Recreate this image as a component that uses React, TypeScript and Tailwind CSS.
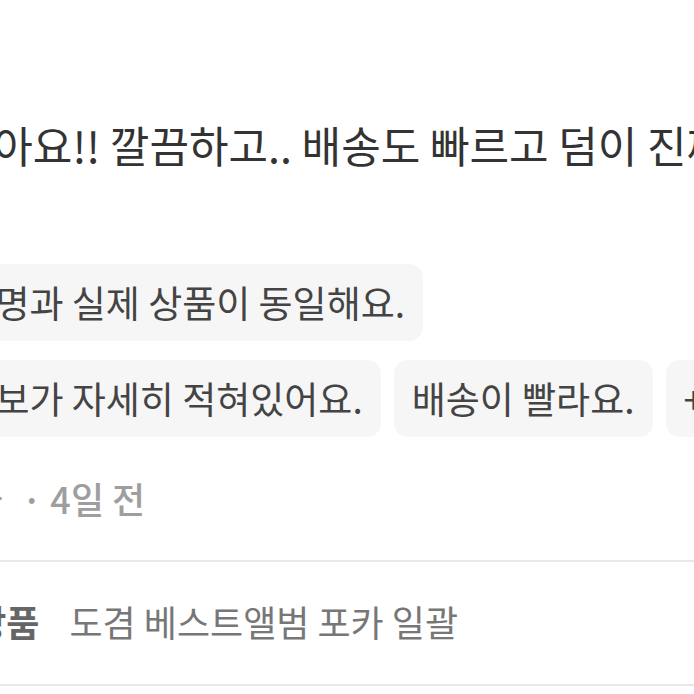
const tagRows = [
  ['상품 설명과 실제 상품이 동일해요.'],
  ['상품 정보가 자세히 적혀있어요.', '배송이 빨라요.', '+2'],
];

function Tag({ label }: { label: string }) {
  return (
    <span className="flex h-[77px] shrink-0 items-center rounded-[14px] bg-[#f6f6f6] px-[18px] text-[37px] whitespace-nowrap text-[#444]">
      {label}
    </span>
  );
}

export default function App() {
  return (
    <div
      className="h-[694px] w-[694px] overflow-hidden bg-white"
      style={{ fontFamily: '"Noto Sans CJK KR", "Noto Sans", sans-serif' }}
    >
      <div className="ml-[-138px] w-[1100px] pt-[114px]">
        {/* Review body */}
        <p className="ml-[3px] text-[43px] leading-[60px] whitespace-nowrap text-[#333]">
          너무 좋아요!! 깔끔하고.. 배송도 빠르고 덤이 진짜 많아요 감사합니다
        </p>

        {/* Tags */}
        <div className="mt-[90px] ml-[5px] flex flex-col gap-[19px]">
          {tagRows.map((row, i) => (
            <div key={i} className="flex gap-[13px]">
              {row.map((t) => (
                <Tag key={t} label={t} />
              ))}
            </div>
          ))}
        </div>

        {/* Meta */}
        <p className="mt-[37px] ml-[8px] text-[36px] leading-[48px] font-medium whitespace-nowrap text-[#9e9e9e]">
          {'바다사자 '}
          <span className="ml-[11px]">· 4일 전</span>
        </p>
      </div>

      {/* Purchased item */}
      <div className="mt-[38px] flex h-[126px] items-center border-y-2 border-[#e8e8e8] pb-[4px]">
        <div className="ml-[-93px] flex items-center gap-[30px] text-[36px] whitespace-nowrap">
          <span className="font-bold text-[#666]">구매상품</span>
          <span className="text-[#777]">도겸 베스트앨범 포카 일괄</span>
        </div>
      </div>
    </div>
  );
}
